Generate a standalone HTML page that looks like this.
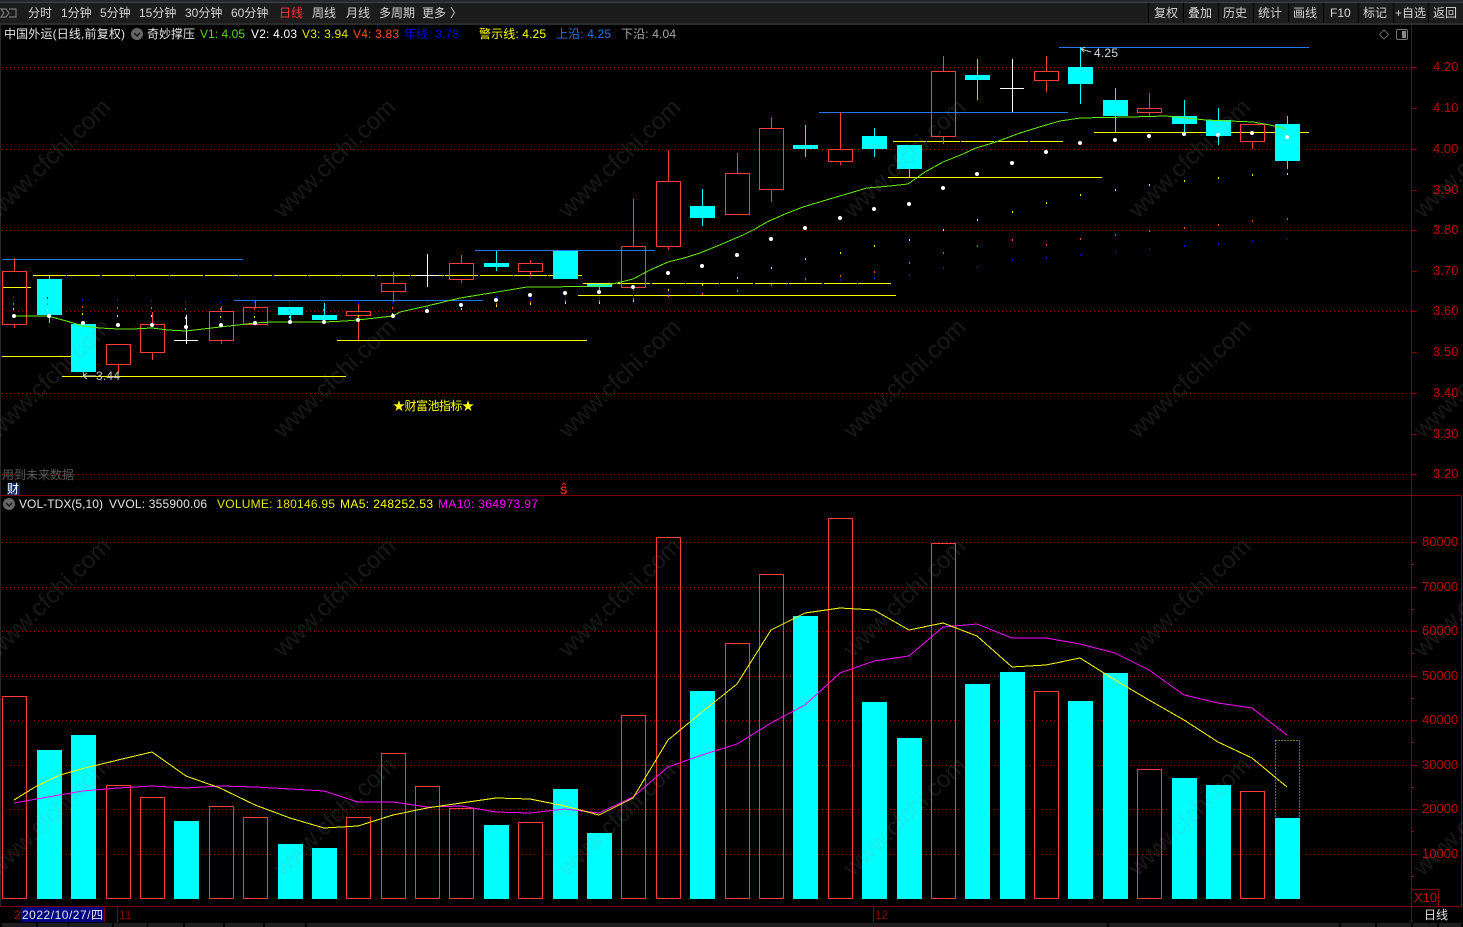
<!DOCTYPE html>
<html lang="zh"><head><meta charset="utf-8"><title>中国外运</title>
<style>
html,body{margin:0;padding:0;background:#000;width:1463px;height:927px;overflow:hidden}
svg{display:block;position:absolute;left:0;top:0}
text{font-family:"Liberation Sans","Noto Sans CJK SC",sans-serif;font-size:12px}
.c{shape-rendering:crispEdges}
.top text{fill:#d4d4d4}
.ax text{fill:#c00000;font-size:13px}
.wm text{font-size:24px;fill:#909090;fill-opacity:.17}
</style></head><body>
<svg width="1463" height="927" viewBox="0 0 1463 927" xmlns="http://www.w3.org/2000/svg">
<rect width="1463" height="927" fill="#000"/>
<g class="c">
<rect width="1463" height="2" fill="#26282b"/><rect y="2" width="1463" height="1" fill="#3c434a"/>
<rect y="3" width="1463" height="20" fill="#1c1c1c"/><rect y="23" width="1463" height="2" fill="#2c2c2c"/>
<rect y="25" x="0" width="1" height="882" fill="#2a2a2a"/>
<path d="M1148.5 3v20M1183.5 3v20M1218.5 3v20M1253.5 3v20M1288.5 3v20M1323.5 3v20M1358.5 3v20M1393.5 3v20M1428.5 3v20" stroke="#000" fill="none"/>
</g>
<path d="M1 9h5l3 4-3 4H1l3-4zM9 9h7v8H9" fill="none" stroke="#777" stroke-width="1.2"/>
<g class="top">
<text x="28" y="17">分时</text><text x="61" y="17">1分钟</text><text x="100" y="17">5分钟</text><text x="139" y="17">15分钟</text><text x="185" y="17">30分钟</text><text x="231" y="17">60分钟</text>
<text x="279" y="17" style="fill:#ff3232">日线</text><text x="312" y="17">周线</text><text x="346" y="17">月线</text><text x="379" y="17">多周期</text><text x="422" y="17">更多</text><text x="450" y="17">〉</text>
<text x="1154" y="17">复权</text><text x="1188" y="17">叠加</text><text x="1223" y="17">历史</text><text x="1258" y="17">统计</text><text x="1293" y="17">画线</text><text x="1330" y="17">F10</text><text x="1363" y="17">标记</text><text x="1395" y="17">+自选</text><text x="1433" y="17">返回</text>
</g>
<!-- grids -->
<path d="M2 67.5H1411M2 149.5H1411M2 230.5H1411M2 311.5H1411M2 393.5H1411M2 474.5H1411M2 542.5H1411M2 587.5H1411M2 631.5H1411M2 676.5H1411M2 720.5H1411M2 765.5H1411M2 809.5H1411M2 854.5H1411" stroke="#7a0000" stroke-dasharray="1 3" fill="none" class="c"/>
<path d="M1411.5 25V906M1412 495.5H1461.5M0 495.5H1412M1461.5 495V906M0 906.5H1462M1412 889.5H1438.5V906M1411 67.5h6M1411 108.5h6M1411 149.5h6M1411 190.5h6M1411 230.5h6M1411 271.5h6M1411 311.5h6M1411 352.5h6M1411 393.5h6M1411 434.5h6M1411 474.5h6M1411 542.5h6M1411 564.5h3M1411 587.5h6M1411 609.5h3M1411 631.5h6M1411 653.5h3M1411 676.5h6M1411 698.5h3M1411 720.5h6M1411 742.5h3M1411 765.5h6M1411 787.5h3M1411 809.5h6M1411 831.5h3M1411 854.5h6M1411 876.5h3M21.5 907v15M104.5 907v15M117.5 907v15M873.5 907v15M1411.5 906v16" stroke="#800000" fill="none" class="c"/>
<g class="ax">
<text x="1433" y="71">4.20</text><text x="1433" y="112">4.10</text><text x="1433" y="153">4.00</text><text x="1433" y="194">3.90</text><text x="1433" y="234">3.80</text><text x="1433" y="275">3.70</text><text x="1433" y="315">3.60</text><text x="1433" y="356">3.50</text><text x="1433" y="397">3.40</text><text x="1433" y="438">3.30</text><text x="1433" y="478">3.20</text>
<text x="1422" y="546">80000</text><text x="1422" y="591">70000</text><text x="1422" y="635">60000</text><text x="1422" y="680">50000</text><text x="1422" y="724">40000</text><text x="1422" y="769">30000</text><text x="1422" y="813">20000</text><text x="1422" y="858">10000</text>
<text x="1414" y="902">X10</text>
</g>
<!-- volume bars -->
<g class="c">
<path fill="none" stroke="#ff3c3c" d="M2.5 696.5h24v202h-24zM106.5 785.5h24v113h-24zM140.5 797.5h24v101h-24zM209.5 806.5h24v92h-24zM243.5 817.5h24v81h-24zM346.5 817.5h24v81h-24zM381.5 753.5h24v145h-24zM415.5 786.5h24v112h-24zM449.5 808.5h24v90h-24zM518.5 822.5h24v76h-24zM621.5 715.5h24v183h-24zM656.5 537.5h24v361h-24zM725.5 643.5h24v255h-24zM759.5 574.5h24v324h-24zM828.5 518.5h24v380h-24zM931.5 543.5h24v355h-24zM1034.5 691.5h24v207h-24zM1137.5 769.5h24v129h-24zM1240.5 791.5h24v107h-24z"/>
<path fill="#00ffff" d="M37 750h25v149H37zM71 735h25v164H71zM174 821h25v78h-25zM278 844h25v55h-25zM312 848h25v51h-25zM484 825h25v74h-25zM553 789h25v110h-25zM587 833h25v66h-25zM690 691h25v208h-25zM793 616h25v283h-25zM862 702h25v197h-25zM897 738h25v161h-25zM965 684h25v215h-25zM1000 672h25v227h-25zM1068 701h25v198h-25zM1103 673h25v226h-25zM1172 778h25v121h-25zM1206 785h25v114h-25zM1275 818h25v81h-25z"/>
<path fill="none" stroke="#e6e600" stroke-dasharray="1 2" d="M1275.5 740.5h24v77M1275.5 740.5v77"/>
</g>
<polyline class="c" fill="none" stroke="#ff00ff" points="14,803 48,797 83,791 118,788 152,786 186,788 220,786 255,787 290,789 324,791 358,802 393,802 427,807 461,806 496,812 530,813 565,809 599,813 633,797 668,767 702,755 737,744 771,723 805,705 840,673 874,661 909,656 943,627 977,624 1012,638 1046,638 1080,644 1115,653 1149,670 1184,695 1218,703 1252,708 1287,735"/>
<polyline class="c" fill="none" stroke="#ffff00" points="14,800 35,787 60,775 85,768 118,760 152,752 186,776 220,788 255,805 290,818 324,828 358,826 393,815 427,808 461,803 496,798 530,799 565,806 599,815 633,798 668,740 702,712 737,684 771,630 805,613 840,608 874,610 909,630 943,623 977,636 1012,667 1046,665 1080,658 1115,680 1149,700 1184,720 1218,742 1252,758 1287,787"/>
<!-- horizontal level lines -->
<g class="c" fill="none">
<path stroke="#1e78f0" d="M2 259.5H243M234 300.5H483M475 250.5H655M819 112.5H1068M1059 47.5H1309"/>
<path stroke="#ffff00" d="M2 287.5H31M33 275.5H66M67 275.5H100M102 275.5H135M136 275.5H169M170 275.5H203M205 275.5H238M239 275.5H272M274 275.5H307M308 275.5H341M342 275.5H375M377 275.5H410M411 275.5H444M445 275.5H478M480 275.5H513M514 275.5H547M548 275.5H582M2 356.5H71M62 376.5H346M337 340.5H587M583 283.5H616M617 283.5H650M652 283.5H685M686 283.5H719M720 283.5H753M755 283.5H788M789 283.5H822M824 283.5H857M858 283.5H891M578 295.5H896M893 141.5H926M927 141.5H960M961 141.5H994M995 141.5H1028M1030 141.5H1063M888 177.5H1102M1094 132.5H1309"/>
</g>
<!-- candles -->
<g class="c">
<path fill="none" stroke="#ff3c3c" d="M14.5 258v13M14.5 325v3M118.5 365v8M152.5 312v12M152.5 353v7M221.5 306v5M221.5 341v3M255.5 300v7M358.5 304v7M358.5 316v24M393.5 272v11M393.5 292v10M461.5 255v8M461.5 280v3M530.5 260v3M530.5 272v4M633.5 199v48M633.5 288v3M668.5 150v31M668.5 247v3M737.5 153v20M771.5 117v11M771.5 190v12M840.5 112v37M840.5 162v3M943.5 56v15M943.5 137v7M1046.5 56v15M1046.5 81v11M1149.5 93v15M1149.5 113v3M1252.5 142v7"/>
<path fill="none" stroke="#ff3c3c" d="M2.5 271.5h24v53h-24zM106.5 344.5h24v20h-24zM140.5 324.5h24v28h-24zM209.5 311.5h24v29h-24zM243.5 307.5h24v17h-24zM346.5 311.5h24v4h-24zM381.5 283.5h24v8h-24zM449.5 263.5h24v16h-24zM518.5 263.5h24v8h-24zM621.5 246.5h24v41h-24zM656.5 181.5h24v65h-24zM725.5 173.5h24v41h-24zM759.5 128.5h24v61h-24zM828.5 149.5h24v12h-24zM931.5 71.5h24v65h-24zM1034.5 71.5h24v9h-24zM1137.5 108.5h24v4h-24zM1240.5 124.5h24v17h-24z"/>
<path fill="none" stroke="#00ffff" d="M49.5 276v3M49.5 315v8M83.5 372v5M290.5 315v7M324.5 303v12M496.5 251v12M496.5 267v4M599.5 287v4M702.5 189v17M702.5 218v8M805.5 125v20M805.5 149v8M874.5 128v8M874.5 149v8M909.5 169v8M977.5 59v16M977.5 80v20M1080.5 47v20M1080.5 84v20M1115.5 88v12M1115.5 116v16M1184.5 100v16M1184.5 124v10M1218.5 108v12M1218.5 136v9M1287.5 116v8M1287.5 161v8"/>
<path fill="#00ffff" d="M37 279h25v36H37zM71 324h25v48H71zM278 307h25v8h-25zM312 315h25v5h-25zM484 263h25v4h-25zM553 251h25v28h-25zM587 284h25v3h-25zM690 206h25v12h-25zM793 145h25v4h-25zM862 136h25v13h-25zM897 145h25v24h-25zM965 75h25v5h-25zM1068 67h25v17h-25zM1103 100h25v16h-25zM1172 116h25v8h-25zM1206 120h25v16h-25zM1275 124h25v37h-25z"/>
<path fill="none" stroke="#fff" d="M186.5 315v29M174 340.5h24M427.5 254v33M415 275.5h24M1012.5 59v53M1000 88.5h24"/>
</g>
<!-- MA green -->
<polyline class="c" fill="none" stroke="#66ee00" points="14,316 48,316 70,322 83,326 100,328 118,329 133,329 152,328 168,330 186,331 203,329 220,327 238,325 255,323 272,322 290,322 324,322 345,321 358,320 375,318 393,316 400,312 427,306 460,298 497,292 527,287 550,287 600,286 617,283 633,279 650,270 668,262 684,258 700,253 722,244 743,235 755,229 767,222 785,214 803,207 833,198 867,188 890,186 908,184 925,172 943,162 963,154 976,148 996,142 1020,133 1046,125 1060,121 1080,118 1130,117 1166,116 1206,120 1253,122 1270,125 1286,129"/>
<!-- small indicator dots -->
<g class="c" fill="none">
<path stroke="#0000e6" d="M13.5 296v2M47.5 297v2M82.5 299v2M117.5 299v2M151.5 300v2M185.5 301v2M220.5 301v2M254.5 301v2M289.5 301v2M323.5 301v2M358.5 302v2M392.5 302v2M427.5 301v2M461.5 298v2M496.5 296v2M530.5 298v2M565.5 295v2M599.5 297v2M633.5 295v2M668.5 294v2M702.5 292v2M737.5 289v2M771.5 285v2M805.5 280v2M840.5 279v2M874.5 277v2M909.5 274v2M943.5 267v2M977.5 266v2M1012.5 259v2M1046.5 257v2M1080.5 254v2M1115.5 251v2M1149.5 248v2M1184.5 245v2M1218.5 243v2M1252.5 240v2M1287.5 238v2"/>
<path stroke="#ff5a28" d="M13.5 303v2M47.5 303v2M82.5 306v2M117.5 307v2M151.5 307v2M185.5 308v2M220.5 308v2M254.5 308v2M289.5 309v2M323.5 309v2M358.5 309v2M392.5 307v2M427.5 306v2M461.5 303v2M496.5 303v2M530.5 301v2M565.5 300v2M599.5 300v2M633.5 298v2M668.5 295v2M702.5 293v2M737.5 290v2M771.5 284v2M805.5 278v2M840.5 275v2M874.5 271v2M909.5 262v2M943.5 252v2M977.5 245v2M1012.5 239v2M1046.5 244v2M1080.5 238v2M1115.5 234v2M1149.5 230v2M1184.5 227v2M1218.5 224v2M1252.5 220v2M1287.5 218v2"/>
<path stroke="#ffff00" d="M13.5 308v2M47.5 309v2M82.5 313v2M117.5 315v2M151.5 315v2M185.5 317v2M220.5 316v2M254.5 316v2M289.5 316v2M323.5 316v2M358.5 315v2M392.5 313v2M427.5 309v2M461.5 308v2M496.5 305v2M530.5 303v2M565.5 302v2M599.5 302v2M633.5 300v2M668.5 289v2M702.5 284v2M737.5 277v2M771.5 267v2M805.5 258v2M840.5 252v2M874.5 245v2M909.5 239v2M943.5 229v2M977.5 219v2M1012.5 211v2M1046.5 202v2M1080.5 194v2M1115.5 189v2M1149.5 184v2M1184.5 180v2M1218.5 177v2M1252.5 174v2M1287.5 173v2"/>
</g>
<!-- white dots -->
<path fill="none" stroke="#fff" stroke-width="4" stroke-linecap="round" d="M14 316h.01M49 316h.01M83 323h.01M118 325h.01M152 325h.01M186 327h.01M221 325h.01M255 323h.01M290 322h.01M324 322h.01M358 320h.01M393 316h.01M427 311h.01M461 305h.01M496 300h.01M530 295h.01M565 293h.01M599 292h.01M633 287h.01M668 273h.01M702 266h.01M737 255h.01M771 239h.01M805 228h.01M840 218h.01M874 209h.01M909 204h.01M943 188h.01M977 174h.01M1012 163h.01M1046 152h.01M1080 143h.01M1115 140h.01M1149 136h.01M1184 134h.01M1218 135h.01M1252 133h.01M1287 137h.01"/>
<!-- labels in chart -->
<text x="1094" y="57" fill="#d4dce4" textLength="24">4.25</text><path d="M1081 49l4-2M1081 49l3 3M1081 49l10 3" stroke="#ccc" fill="none"/>
<text x="96" y="380" fill="#b8c8dc" textLength="24">3.44</text><path d="M83 376l4-3M83 376l4 3M83 376H96" stroke="#ccc" fill="none"/>
<text x="393" y="410" fill="#ffff00" textLength="81">★财富池指标★</text>
<text x="2" y="479" fill="#5a5a5a">用到未来数据</text>
<rect x="7" y="483" width="13" height="12" fill="#0a2a6a"/><text x="7" y="493" fill="#fff">财</text>
<text x="560" y="494" fill="#ff2020" style="font-size:11px;font-weight:bold">S</text><path d="M562 485l2-2 2 2" stroke="#ff2020" fill="none"/>
<!-- info row -->
<text x="4" y="38" fill="#e6e6e6" textLength="121">中国外运(日线,前复权)</text>
<circle cx="137" cy="34" r="6" fill="#666"/><path d="M134 33l3 3 3-3" stroke="#111" fill="none" stroke-width="1.3"/>
<text x="147" y="38" fill="#e6e6e6">奇妙撑压</text>
<text x="200" y="38" fill="#55dd00" textLength="45">V1: 4.05</text>
<text x="251" y="38" fill="#fff" textLength="46">V2: 4.03</text>
<text x="302" y="38" fill="#e6e600" textLength="46">V3: 3.94</text>
<text x="353" y="38" fill="#ff5020" textLength="46">V4: 3.83</text>
<text x="404" y="38" fill="#0000e0" textLength="55">年线: 3.78</text>
<text x="479" y="38" fill="#ffff00" textLength="67">警示线: 4.25</text>
<text x="556" y="38" fill="#1e78f0" textLength="55">上沿: 4.25</text>
<text x="621" y="38" fill="#a8a8a8" textLength="55">下沿: 4.04</text>
<path d="M1384 30l4.5 4.5-4.5 4.5-4.5-4.5z" fill="none" stroke="#666"/>
<rect x="1396.5" y="29.500" width="11" height="10" rx="1.5" fill="none" stroke="#777"/><rect x="1402" y="31" width="4" height="7" fill="#888"/>
<!-- volume row -->
<circle cx="9" cy="504" r="6" fill="#666"/><path d="M6 503l3 3 3-3" stroke="#111" fill="none" stroke-width="1.3"/>
<text x="19" y="508" fill="#e6e6e6" textLength="84">VOL-TDX(5,10)</text>
<text x="109" y="508" fill="#e6e6e6" textLength="98">VVOL: 355900.06</text>
<text x="217" y="508" fill="#e6e600" textLength="118">VOLUME: 180146.95</text>
<text x="340" y="508" fill="#ffff00" textLength="93">MA5: 248252.53</text>
<text x="438" y="508" fill="#ff00ff" textLength="100">MA10: 364973.97</text>
<!-- bottom -->
<rect x="21" y="907" width="83" height="15" fill="#000080" class="c"/>
<text x="14" y="919" fill="#a00000">2</text>
<text x="22" y="919" fill="#e8e8e8" textLength="81">2022/10/27/四</text>
<text x="119" y="919" fill="#800000">11</text>
<text x="875" y="919" fill="#800000">12</text>
<text x="1424" y="919" fill="#e0e0e0">日线</text>
<g class="c" fill="#1e1e1e">
<rect x="2" y="923" width="34" height="4"/><rect x="38" y="923" width="30" height="4"/><rect x="69" y="923" width="43" height="4"/><rect x="114" y="923" width="33" height="4"/><rect x="148" y="923" width="35" height="4"/><rect x="185" y="923" width="38" height="4"/><rect x="225" y="923" width="38" height="4"/><rect x="265" y="923" width="40" height="4"/><rect x="307" y="923" width="800" height="4"/><rect x="1109" y="923" width="230" height="4"/><rect x="1341" y="923" width="34" height="4"/><rect x="1377" y="923" width="34" height="4"/><rect x="1413" y="923" width="24" height="4"/><rect x="1439" y="923" width="22" height="4"/>
</g>
<!-- watermarks -->
<g class="wm" text-anchor="middle">
<text transform="translate(55 164) rotate(-44)">www.cfchi.com</text><text transform="translate(340 164) rotate(-44)">www.cfchi.com</text><text transform="translate(625 164) rotate(-44)">www.cfchi.com</text><text transform="translate(910 164) rotate(-44)">www.cfchi.com</text><text transform="translate(1195 164) rotate(-44)">www.cfchi.com</text><text transform="translate(1480 164) rotate(-44)">www.cfchi.com</text>
<text transform="translate(55 384) rotate(-44)">www.cfchi.com</text><text transform="translate(340 384) rotate(-44)">www.cfchi.com</text><text transform="translate(625 384) rotate(-44)">www.cfchi.com</text><text transform="translate(910 384) rotate(-44)">www.cfchi.com</text><text transform="translate(1195 384) rotate(-44)">www.cfchi.com</text><text transform="translate(1480 384) rotate(-44)">www.cfchi.com</text>
<text transform="translate(55 603) rotate(-44)">www.cfchi.com</text><text transform="translate(340 603) rotate(-44)">www.cfchi.com</text><text transform="translate(625 603) rotate(-44)">www.cfchi.com</text><text transform="translate(910 603) rotate(-44)">www.cfchi.com</text><text transform="translate(1195 603) rotate(-44)">www.cfchi.com</text><text transform="translate(1480 603) rotate(-44)">www.cfchi.com</text>
<text transform="translate(55 822) rotate(-44)">www.cfchi.com</text><text transform="translate(340 822) rotate(-44)">www.cfchi.com</text><text transform="translate(625 822) rotate(-44)">www.cfchi.com</text><text transform="translate(910 822) rotate(-44)">www.cfchi.com</text><text transform="translate(1195 822) rotate(-44)">www.cfchi.com</text><text transform="translate(1480 822) rotate(-44)">www.cfchi.com</text>
</g>
</svg>
</body></html>
